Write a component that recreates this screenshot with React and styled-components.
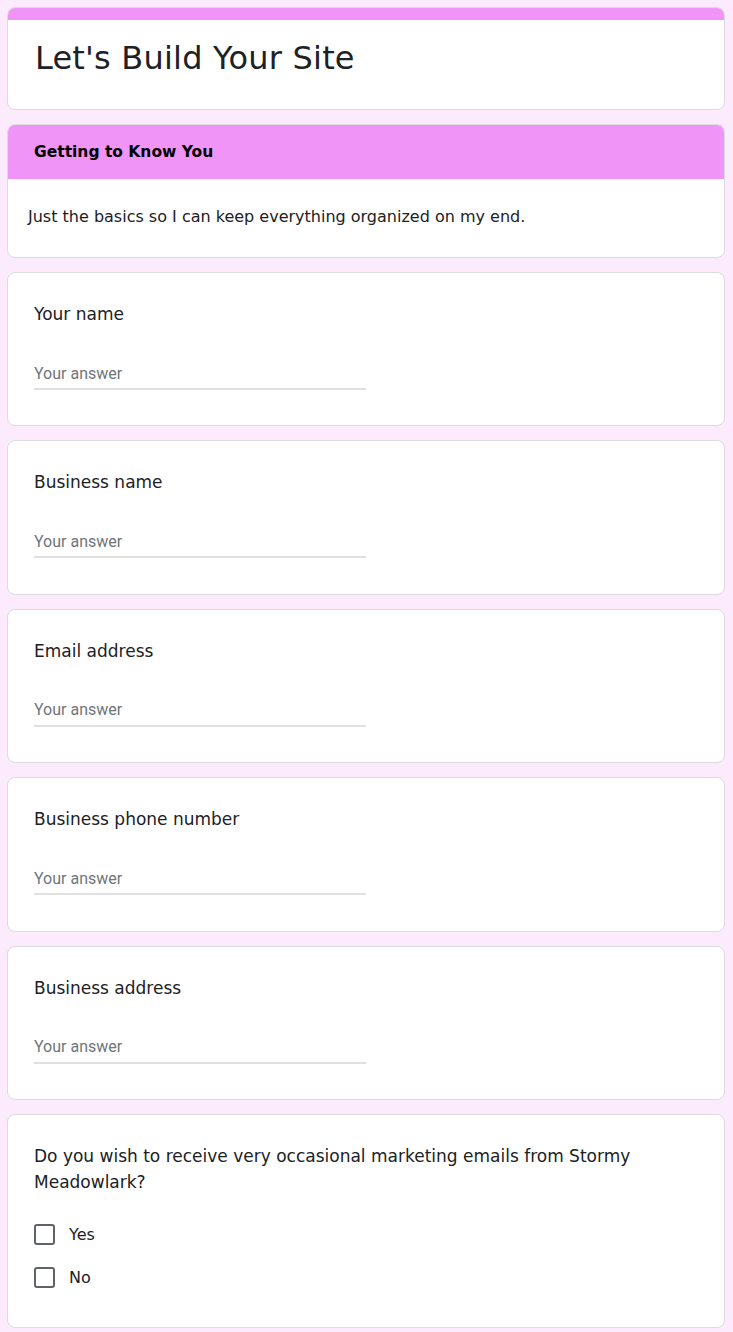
import React from "react";
import styled, { createGlobalStyle } from "styled-components";

const GlobalStyle = createGlobalStyle`
	html, body {
		margin: 0;
		padding: 0;
		background: #fcebfc;
	}
	body {
		font-family: "DejaVu Sans", "Liberation Sans", sans-serif;
		color: #202124;
	}
`;

const Page = styled.main`
	display: flex;
	flex-direction: column;
	gap: 14px;
	padding: 7px 8px 5px 7px;
`;

const Card = styled.section`
	background: #fff;
	border: 1px solid #dadce0;
	border-radius: 8px;
	overflow: hidden;
`;

const TopBar = styled.div`
	height: 12px;
	background: #f094f8;
`;

const TitleBody = styled.div`
	padding: 15px 27px 28px;
`;

const Title = styled.h1`
	margin: 0;
	font-size: 32px;
	font-weight: 400;
	line-height: 46px;
	letter-spacing: 0.2px;
`;

const SectionHeader = styled.div`
	display: flex;
	align-items: center;
	height: 54px;
	padding: 0 26px;
	background: #f094f8;
`;

const SectionTitle = styled.h2`
	margin: 0;
	font-size: 15.5px;
	font-weight: 700;
	color: #000;
`;

const SectionText = styled.p`
	margin: 0;
	padding: 26px 20px 28px;
	font-size: 16px;
	line-height: 24px;
`;

const Question = styled(Card)`
	padding: 28px 26px 35.4px;
`;

const Label = styled.div`
	font-size: 17px;
	line-height: 26px;
	padding-right: 14px;
`;

const Answer = styled.input`
	display: block;
	box-sizing: border-box;
	width: 332px;
	height: 32px;
	margin-top: 31px;
	padding: 0;
	border: none;
	border-bottom: 2px solid #e0e0e0;
	outline: none;
	font-family: Roboto, "Liberation Sans", sans-serif;
	font-size: 16px;
	color: #202124;
	background: transparent;

	&::placeholder {
		color: #70757a;
	}
`;

const Options = styled.div`
	display: flex;
	flex-direction: column;
	gap: 22px;
	margin-top: 29px;
	margin-bottom: 3.6px;
`;

const Option = styled.label`
	display: flex;
	align-items: center;
	gap: 14px;
	font-size: 16px;
	line-height: 21px;
`;

const Box = styled.span`
	box-sizing: border-box;
	width: 21px;
	height: 21px;
	border: 2px solid #5f6368;
	border-radius: 3px;
	flex-shrink: 0;
`;

const questions = [
	"Your name",
	"Business name",
	"Email address",
	"Business phone number",
	"Business address",
];

const App = () => {
	return (
		<>
			<GlobalStyle />
			<Page>
				<Card>
					<TopBar />
					<TitleBody>
						<Title>Let's Build Your Site</Title>
					</TitleBody>
				</Card>
				<Card>
					<SectionHeader>
						<SectionTitle>Getting to Know You</SectionTitle>
					</SectionHeader>
					<SectionText>
						Just the basics so I can keep everything organized on my end.
					</SectionText>
				</Card>
				{questions.map((q) => (
					<Question key={q}>
						<Label>{q}</Label>
						<Answer placeholder="Your answer" />
					</Question>
				))}
				<Question>
					<Label>
						Do you wish to receive very occasional marketing emails from Stormy
						Meadowlark?
					</Label>
					<Options>
						<Option>
							<Box />
							Yes
						</Option>
						<Option>
							<Box />
							No
						</Option>
					</Options>
				</Question>
			</Page>
		</>
	);
};

export default App;
